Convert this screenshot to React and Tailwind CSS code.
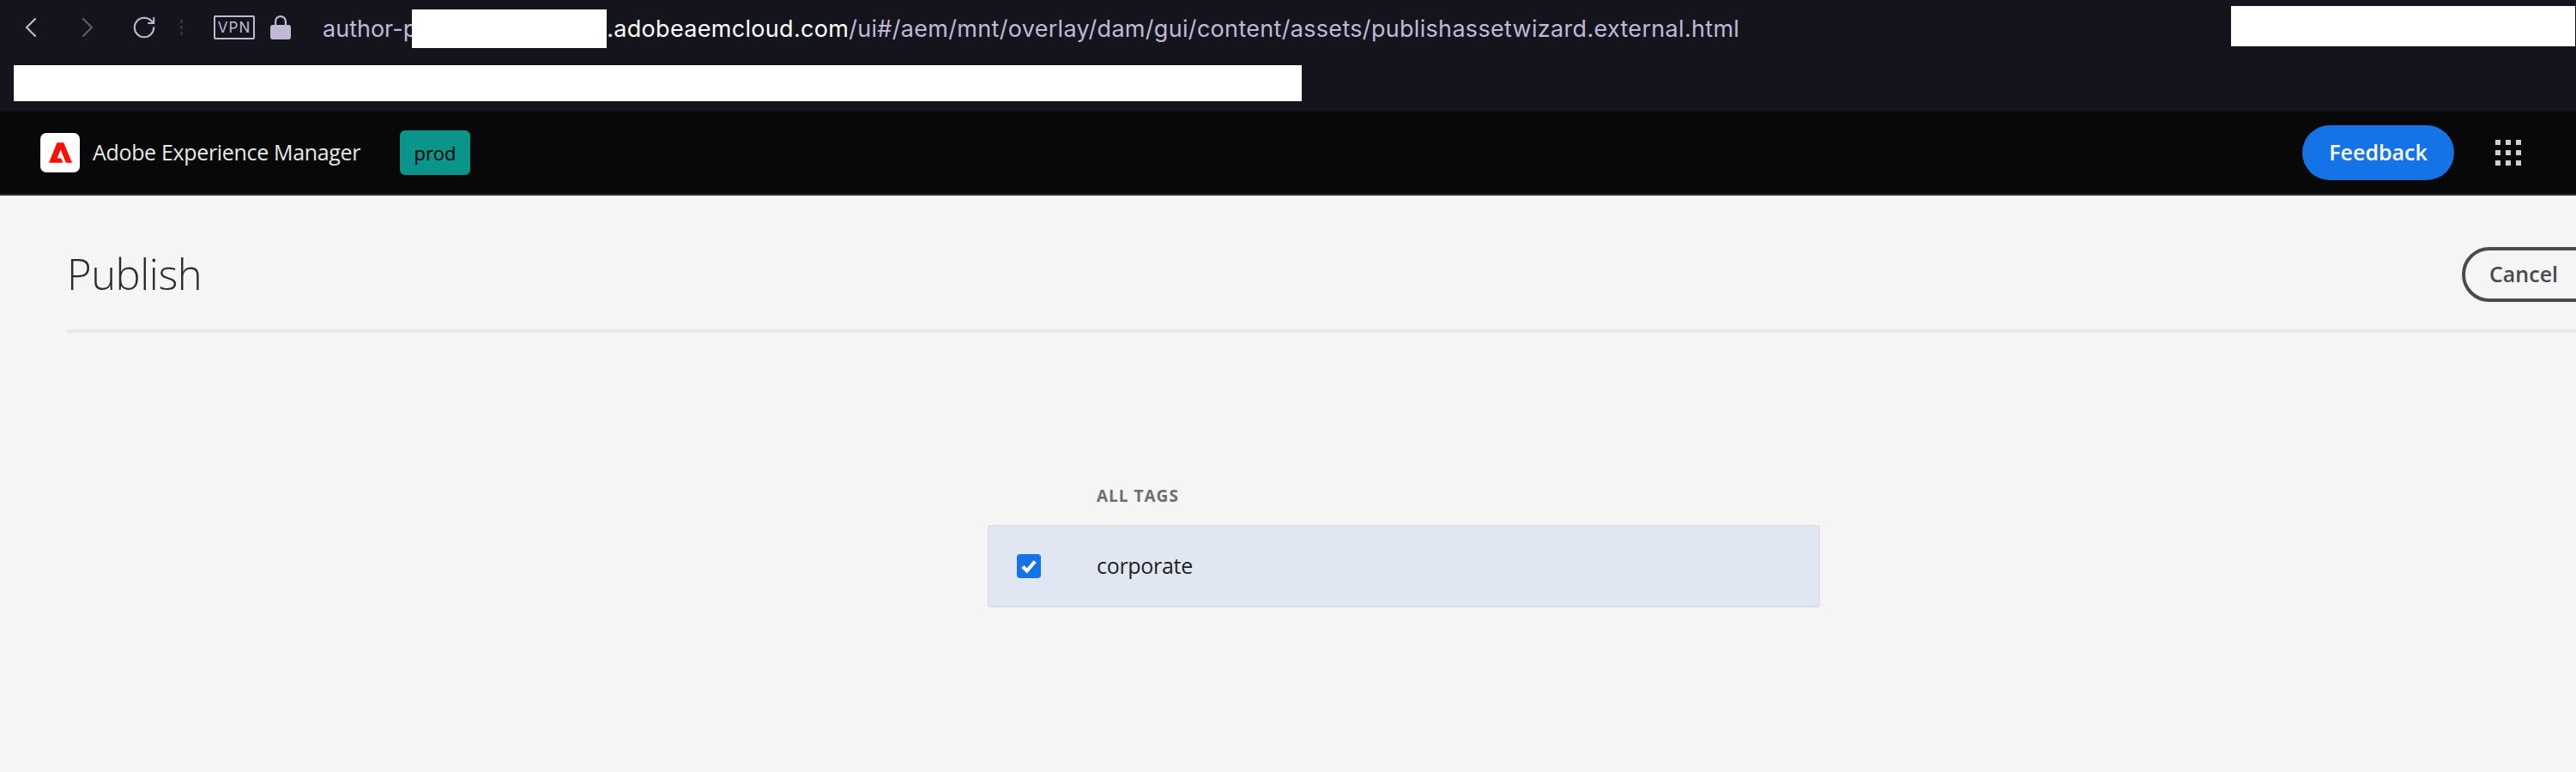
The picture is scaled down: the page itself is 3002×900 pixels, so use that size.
import { RotateCw, ChevronLeft, ChevronRight } from "lucide-react";

function AdobeMark() {
  return (
    <svg viewBox="0 0 30 26" className="w-[27px] h-[24px]" fill="#fa0f00">
      <path d="M10.5 0h8.6L30 26h-7.9L15.2 9l-4.7 11.2h5.3l2.3 5.8H0z" />
    </svg>
  );
}

function BrowserBar() {
  return (
    <div className="h-[130px] bg-[#14141d] flex flex-col font-['Inter',sans-serif]">
      <div className="flex items-start h-[76px]">
        <div className="flex items-center h-[64px] text-[#c0b9d6]">
          <ChevronLeft size={40} strokeWidth={1.3} className="ml-[16px]" />
          <ChevronRight size={40} strokeWidth={1.3} className="ml-[26px] text-[#5d5a6b]" />
          <RotateCw size={30} strokeWidth={1.6} className="ml-[31px]" />
          <div className="ml-[27px] flex flex-col gap-[3px]">
            <span className="w-[3px] h-[4px] bg-[#34323f]" />
            <span className="w-[3px] h-[4px] bg-[#34323f]" />
            <span className="w-[3px] h-[4px] bg-[#34323f]" />
          </div>
          <div className="ml-[36px] w-[48px] h-[28px] border-2 border-[#c0b9d6] rounded-[2px] flex items-center justify-center text-[17px] tracking-[1px] leading-none">
            VPN
          </div>
          <svg viewBox="0 0 24 28" className="ml-[18px] w-[24px] h-[28px]" fill="#c0b9d6">
            <path d="M5 12V7a7 7 0 0 1 14 0v5h-2.2V7a4.8 4.8 0 0 0-9.6 0v5z" />
            <rect x="0" y="11" width="24" height="17" rx="3" />
          </svg>
        </div>
        <div className="ml-[37px] h-[66px] flex items-center text-[27px] leading-none whitespace-nowrap text-[#c0b9d6]">
          author-p
        </div>
        <div className="relative -ml-[6px] mt-[11px] w-[227px] h-[45px] bg-white" />
        <div className="h-[66px] flex items-center text-[27px] leading-none whitespace-nowrap tracking-[0.31px]">
          <span className="text-white">.adobeaemcloud.com</span>
          <span className="text-[#c0b9d6]">/ui#/aem/mnt/overlay/dam/gui/content/assets/publishassetwizard.external.html</span>
        </div>
        <div className="ml-auto mr-[1px] mt-[7px] w-[401px] h-[47px] bg-white" />
      </div>
      <div className="ml-[16px] w-[1501px] h-[42px] bg-white" />
    </div>
  );
}

function AemHeader() {
  return (
    <div className="h-[98px] bg-[#080808] border-b-2 border-[#2c2c2c] flex items-center font-['Open_Sans',sans-serif]">
      <div className="ml-[47px] w-[46px] h-[46px] bg-white rounded-[7px] flex items-center justify-center">
        <AdobeMark />
      </div>
      <span className="ml-[15px] w-[326px] whitespace-nowrap text-[25px] text-[#e8e8e8] tracking-[-0.33px]">Adobe Experience Manager</span>
      <div className="ml-[32px] w-[82px] h-[52px] bg-[#09958a] rounded-[6px] flex items-center justify-center text-[22px] text-black">
        prod
      </div>
      <button className="ml-auto w-[177px] h-[64px] rounded-full bg-[#1473e6] text-white text-[25px] font-semibold">
        Feedback
      </button>
      <div className="ml-[48px] mr-[64px] grid grid-cols-3 gap-[6px]">
        {Array.from({ length: 9 }).map((_, i) => (
          <span key={i} className="w-[6px] h-[6px] bg-[#d0d0d0]" />
        ))}
      </div>
    </div>
  );
}

export default function App() {
  return (
    <div className="w-[3002px] h-[900px] overflow-hidden bg-[#f5f5f5]">
      <BrowserBar />
      <AemHeader />
      <div className="font-['Open_Sans',sans-serif]">
        <div className="ml-[78px] h-[160px] border-b-4 border-[#eaeaea] flex items-center pt-[28px]">
          <h1 className="text-[49px] font-light text-[#2c2c2c] tracking-[-0.5px]">Publish</h1>
          <button className="ml-auto -mr-[30px] w-[163px] h-[64px] shrink-0 rounded-full border-4 border-[#4b4b4b] text-[#4b4b4b] text-[25px] font-semibold text-left pl-[28px]">
            Cancel
          </button>
        </div>
        <div className="ml-[1151px] w-[970px] mt-[176px]">
          <div className="pl-[127px] h-[48px] pb-[20px] flex items-center text-[19px] font-bold text-[#6e6e6e] tracking-[1px]">
            ALL TAGS
          </div>
          <div className="h-[96px] bg-[#e0e7f2] border border-[#d8dde5] border-b-2 rounded-[4px] flex items-center">
            <div className="ml-[33px] w-[28px] h-[28px] rounded-[4px] bg-[#1473e6] flex items-center justify-center">
              <svg viewBox="0 0 20 20" className="w-[22px] h-[22px]" fill="none" stroke="#fff" strokeWidth="3.8">
                <path d="M3.5 10.5 8 15l8.5-10" />
              </svg>
            </div>
            <span className="ml-[65px] text-[25px] text-[#1f1f1f] tracking-[-0.3px]">corporate</span>
          </div>
        </div>
      </div>
    </div>
  );
}
